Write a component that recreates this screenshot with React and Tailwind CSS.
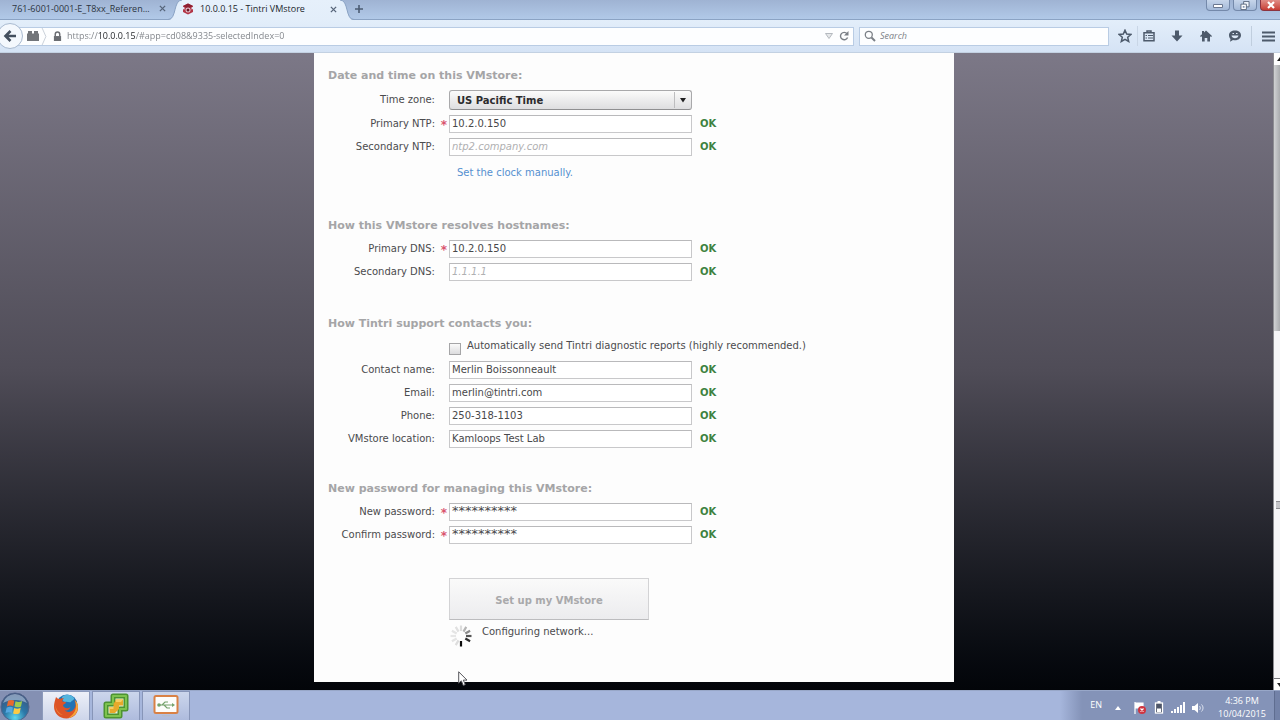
import { useState } from 'react';

const chromeFont = 'font-["Open_Sans","Noto_Sans",sans-serif]';

function TintriLogo() {
    return (
        <svg viewBox="0 0 24 24" className="h-3 w-3 shrink-0">
            <path d="M12 1 22 6v12l-10 5L2 18V6z" fill="#b23546" />
            <path d="M12 1 22 6l-10 5L2 6z" fill="#8d1f30" />
            <path d="M1 7l4 2v4l-4-1zM23 7l-4 2v4l4-1z" fill="#e3eefa" />
            <circle cx="12" cy="14" r="5" fill="#e9c9d2" />
            <circle cx="12" cy="14" r="3" fill="#6d1524" />
        </svg>
    );
}

function CloseGlyph() {
    return (
        <svg viewBox="0 0 8 8" className="h-[7px] w-[7px]">
            <path d="M1 1l6 6M7 1L1 7" stroke="#566479" strokeWidth="1.5" />
        </svg>
    );
}

function TabBar() {
    return (
        <div className="flex h-5 items-stretch border-b border-[#8ba3c4] bg-gradient-to-b from-[#9fb3d3] to-[#b1c9e8]">
            <div className="flex w-[168px] items-center justify-between pl-3 pr-[2px] pb-[2px] text-[9px] text-[#2c3440]">
                <a href="#reference" className="whitespace-nowrap">761-6001-0001-E_T8xx_Referen...</a>
                <button aria-label="Close tab"><CloseGlyph /></button>
            </div>
            <div className="-mb-px flex">
                <svg viewBox="0 0 14 20" className="h-5 w-[14px]">
                    <path d="M0 20C9 20 5 0 14 0v20z" fill="#e3eefa" />
                    <path d="M0 19.500C9 19.500 5 0 14 0" fill="none" stroke="#8ba3c4" />
                </svg>
                <div className="flex w-[158px] items-center bg-gradient-to-b from-[#e6f0fb] to-[#e3eefa] pb-[2px] text-[9px] text-[#22262c]">
                    <TintriLogo />
                    <a href="#vmstore" className="ml-[6px] flex-1 whitespace-nowrap">10.0.0.15 - Tintri VMstore</a>
                    <button aria-label="Close tab" className="mr-[3px]"><CloseGlyph /></button>
                </div>
                <svg viewBox="0 0 14 20" className="h-5 w-[14px]">
                    <path d="M14 20C5 20 9 0 0 0v20z" fill="#e3eefa" />
                    <path d="M14 19.500C5 19.500 9 0 0 0" fill="none" stroke="#8ba3c4" />
                </svg>
            </div>
            <button aria-label="New tab" className="pb-[2px]">
                <svg viewBox="0 0 10 10" className="h-[10px] w-[10px]">
                    <path d="M5 1v8M1 5h8" stroke="#4c5c73" strokeWidth="1.600" />
                </svg>
            </button>
            <div className="ml-auto flex items-start gap-[3px]">
                <button aria-label="Minimize" className="flex h-[11px] w-6 items-center justify-center rounded-b border border-t-0 border-[#7489aa] bg-gradient-to-b from-[#c6d5ea] to-[#a3b9d8]">
                    <svg viewBox="0 0 12 8" className="h-2 w-3"><path d="M1.500 3.500h9v3h-9z" fill="#fff" stroke="#6b7890" /></svg>
                </button>
                <button aria-label="Restore" className="flex h-[11px] w-6 items-center justify-center rounded-b border border-t-0 border-[#7489aa] bg-gradient-to-b from-[#c6d5ea] to-[#a3b9d8]">
                    <svg viewBox="0 0 12 10" className="h-[9px] w-3">
                        <path d="M4.500.500h6v6h-6z" fill="#eef3fa" stroke="#566479" />
                        <path d="M1.500 3.500h6v6h-6z" fill="#fff" stroke="#566479" />
                        <path d="M3.500 5.500h2v2h-2z" fill="#8496b2" />
                    </svg>
                </button>
                <button aria-label="Close" className="flex h-[11px] w-5 items-center justify-center rounded-bl border border-r-0 border-t-0 border-[#8c3440] bg-gradient-to-b from-[#e08c86] to-[#c63b34]">
                    <svg viewBox="0 0 10 8" className="h-2 w-[10px]"><path d="M2 1l6 6M8 1L2 7" stroke="#fff" strokeWidth="2.200" /></svg>
                </button>
            </div>
        </div>
    );
}

function Toolbar() {
    return (
        <div className="flex h-[33px] items-center border-b border-[#c3d1e2] bg-gradient-to-b from-[#e3eefa] to-[#d5e3f5]">
            <button aria-label="Back" className="z-10 -ml-[3px] flex h-[26px] w-[26px] shrink-0 items-center justify-center rounded-full border border-[#a9bad0] bg-[#f4f8fd]">
                <svg viewBox="0 0 14 14" className="h-[14px] w-[14px]">
                    <path d="M7.500 2L2.500 7l5 5M3 7h10" fill="none" stroke="#44505f" strokeWidth="2.600" />
                </svg>
            </button>
            <div className="-ml-2 flex h-[19px] flex-1 items-center border border-[#b9cce4] bg-[#fdfeff] pl-[11px] pr-1">
                <svg viewBox="0 0 12 11" className="h-[11px] w-3 shrink-0">
                    <path d="M0 2.500h1V0h4v2.500h2V0h4v2.500h1V10H0z" fill="#72757a" />
                </svg>
                <svg viewBox="0 0 6 18" className="ml-[2px] h-[17px] w-[6px] shrink-0">
                    <path d="M1 0l4 9-4 9" fill="none" stroke="#c7ced8" />
                </svg>
                <svg viewBox="0 0 10 12" className="ml-[6px] h-[11px] w-[9px] shrink-0">
                    <path d="M2.500 6V3.500a2.500 2.500 0 0 1 5 0V6" fill="none" stroke="#6a6d72" strokeWidth="1.600" />
                    <path d="M1 5.500h8V11H1z" fill="#6a6d72" />
                </svg>
                {/* the host part of the address is darker than the rest */}
                <input
                    aria-label="Address"
                    defaultValue="https://10.0.0.15/#app=cd08&9335-selectedIndex=0"
                    className="ml-[5px] flex-1 bg-[linear-gradient(90deg,#7d8187_31px,#1f2226_31px,#1f2226_68px,#7d8187_68px)] bg-clip-text text-[9px] text-transparent outline-none"
                />
                <svg viewBox="0 0 8 6" className="h-[6px] w-2"><path d="M.500.500h7L4 5.500z" fill="#e6e8ea" stroke="#b4b9bf" /></svg>
                <button aria-label="Reload" className="ml-[6px]">
                    <svg viewBox="0 0 10 10" className="h-[10px] w-[10px]">
                        <path d="M8 2.600A3.700 3.700 0 1 0 8.600 6.500" fill="none" stroke="#7a7f86" strokeWidth="1.400" />
                        <path d="M9.500 0v4.500H5z" fill="#7a7f86" />
                    </svg>
                </button>
            </div>
            <label className="ml-[5px] flex h-[19px] w-[250px] items-center border border-[#b9cce4] bg-[#fdfeff] pl-1">
                <svg viewBox="0 0 12 12" className="h-3 w-3 shrink-0">
                    <circle cx="4.800" cy="4.800" r="3.500" fill="none" stroke="#7b8087" strokeWidth="1.300" />
                    <path d="M7.500 7.500L11 11" stroke="#7b8087" strokeWidth="1.900" />
                </svg>
                <input aria-label="Search" placeholder="Search" className="ml-1 w-full bg-transparent text-[9px] italic outline-none placeholder:text-[#7c8086]" />
            </label>
            <div className="flex items-center pl-[9px] text-[#4d5a6b]">
                <button aria-label="Bookmark">
                    <svg viewBox="0 0 14 14" className="h-[14px] w-[14px]">
                        <path d="M7 1.200l1.700 3.900 4.200.400-3.200 2.800 1 4.200L7 10.300l-3.700 2.200 1-4.200L1.100 5.500l4.200-.400z" fill="none" stroke="currentColor" strokeWidth="1.500" />
                    </svg>
                </button>
                <span className="ml-[5px] h-5 w-px bg-[#c9d6e6]" />
                <button aria-label="Bookmarks list" className="ml-[5px]">
                    <svg viewBox="0 0 12 12" className="h-3 w-3">
                        <path d="M1 2.800h10v8H1zM4 2.500V1h4v1.500" fill="none" stroke="currentColor" strokeWidth="1.500" />
                        <path d="M2.500 5.500H4M5 5.500h5M2.500 8H4M5 8h5" stroke="currentColor" strokeWidth="1.200" />
                    </svg>
                </button>
                <button aria-label="Downloads" className="ml-4">
                    <svg viewBox="0 0 12 12" className="h-3 w-3"><path d="M4 .500h4v5h3.500L6 11.500.500 5.500H4z" fill="currentColor" /></svg>
                </button>
                <button aria-label="Home" className="ml-[17px]">
                    <svg viewBox="0 0 12 12" className="h-3 w-3">
                        <path d="M6 .500l6 5.500-.800 1L10 6.200V11.500H7.300V8H4.700v3.500H2V6.200L.800 7 0 6l2-1.800V1h2v1.500z" fill="currentColor" />
                    </svg>
                </button>
                <button aria-label="Chat" className="ml-4">
                    <svg viewBox="0 0 14 12" className="h-3 w-[14px]">
                        <path d="M7 .500c3.600 0 6 2 6 4.800s-2.400 5-6 5c-.700 0-1.300-.100-2-.200L2 11.800l.500-2.800C1.500 8 1 6.700 1 5.300 1 2.500 3.400.500 7 .500z" fill="currentColor" />
                        <path d="M3.500 5.500h7c-.300 1.900-1.700 2.700-3.500 2.700s-3.200-.800-3.500-2.700z" fill="#dce8f6" />
                        <path d="M4.500 3h1.500v1H4.500zM8 3h1.500v1H8z" fill="#dce8f6" />
                    </svg>
                </button>
                <span className="ml-[9px] h-5 w-px bg-[#c0cede]" />
                <button aria-label="Menu" className="ml-[10px] mr-[5px]">
                    <svg viewBox="0 0 13 11" className="h-[11px] w-[13px]"><path d="M0 1.500h13M0 5.500h13M0 9.500h13" stroke="currentColor" strokeWidth="2" /></svg>
                </button>
            </div>
        </div>
    );
}

function Section({ title, className = '', children }) {
    return (
        <section className={className}>
            <h2 className="mb-1 pl-[14px] text-[11px] font-bold leading-5 text-[#a5a5a7]">{title}</h2>
            <div className="flex flex-col gap-[5px]">{children}</div>
        </section>
    );
}

function Label({ id, children }) {
    return <label htmlFor={id} className="w-[121px] text-right leading-[18px]">{children}</label>;
}

function Field({ id, label, required, value, placeholder, masked }) {
    const [text, setText] = useState(value || '');
    return (
        <div className="flex h-[18px] items-center">
            <Label id={id}>{label}</Label>
            <span className="w-[14px] pt-[2px] pr-[2px] text-right text-[12px] font-bold leading-[14px] text-[#d9546e]">{required ? '*' : ''}</span>
            <input
                id={id}
                value={text}
                placeholder={placeholder}
                onChange={(e) => setText(e.target.value)}
                className={`h-[18px] w-[243px] border border-[#c8c8ca] border-t-[#b9b9bb] bg-white px-[2px] pb-[2px] text-[#48484a] outline-none placeholder:italic placeholder:text-[#b0b0b2] ${masked ? 'text-[13px]' : ''}`}
            />
            <span className="ml-2 font-bold leading-[18px] text-[#3d8240]">OK</span>
        </div>
    );
}

const spokes = [
    { angle: 0, color: '#dcdcdc' },
    { angle: 30, color: '#b5b5b5' },
    { angle: 60, color: '#8a8a8a' },
    { angle: 90, color: '#555555' },
    { angle: 120, color: '#2c2c2c' },
    { angle: 180, color: '#0c0c0c' },
    { angle: 210, color: '#dddddd' },
    { angle: 240, color: '#e4e4e4' },
    { angle: 270, color: '#e6e6e6' },
    { angle: 300, color: '#e4e4e4' },
    { angle: 330, color: '#e0e0e0' },
];

function Spinner() {
    return (
        <svg viewBox="0 0 24 24" className="h-6 w-6">
            {spokes.map((s) => (
                <path key={s.angle} d="M12 1.500v5.500" stroke={s.color} strokeWidth="2.200" transform={`rotate(${s.angle} 12 12)`} />
            ))}
        </svg>
    );
}

function SetupForm() {
    return (
        <form className='relative w-[640px] self-start bg-[#fdfdfd] pt-[13px] pb-[34px] font-["DejaVu_Sans",Verdana,sans-serif] text-[10px] text-[#4b4b4d]' onSubmit={(e) => e.preventDefault()}>
            <Section title="Date and time on this VMstore:">
                <div className="flex h-5 items-center">
                    <Label id="tz">Time zone:</Label>
                    <div className="relative ml-[14px]">
                        <select id="tz" className="block h-5 w-[243px] appearance-none rounded-[3px] border border-[#a9a9ab] border-b-[#8f8f91] bg-gradient-to-b from-[#fbfbfb] to-[#dedee0] pl-[7px] font-bold text-[#2b2b2d]">
                            <option>US Pacific Time</option>
                        </select>
                        <svg viewBox="0 0 18 16" className="pointer-events-none absolute right-0 top-[2px] h-4 w-[18px]">
                            <path d="M.500 0v16" stroke="#bdbdbf" />
                            <path d="M6 6h6L9 10.500z" fill="#1f1f20" />
                        </svg>
                    </div>
                </div>
                <Field id="ntp1" label="Primary NTP:" required value="10.2.0.150" />
                <Field id="ntp2" label="Secondary NTP:" placeholder="ntp2.company.com" />
                <a href="#clock" className="ml-[143px] self-start leading-6 text-[#5590d0]">Set the clock manually.</a>
            </Section>

            <Section title="How this VMstore resolves hostnames:" className="mt-[31px]">
                <Field id="dns1" label="Primary DNS:" required value="10.2.0.150" />
                <Field id="dns2" label="Secondary DNS:" placeholder="1.1.1.1" />
            </Section>

            <Section title="How Tintri support contacts you:" className="mt-[33px]">
                <div className="flex h-[18px] items-start pl-[135px]">
                    <input id="diag" type="checkbox" className="mt-[5px] h-3 w-3 appearance-none border border-[#a5a5a7] bg-gradient-to-b from-[#fafafa] to-[#dcdcde]" />
                    <label htmlFor="diag" className="ml-[6px] leading-4">Automatically send Tintri diagnostic reports (highly recommended.)</label>
                </div>
                <Field id="contact" label="Contact name:" value="Merlin Boissonneault" />
                <Field id="email" label="Email:" value="merlin@tintri.com" />
                <Field id="phone" label="Phone:" value="250-318-1103" />
                <Field id="location" label="VMstore location:" value="Kamloops Test Lab" />
            </Section>

            <Section title="New password for managing this VMstore:" className="mt-[31px]">
                <Field id="pw1" label="New password:" required masked value="**********" />
                <Field id="pw2" label="Confirm password:" required masked value="**********" />
            </Section>

            <div className="mt-[34px] pl-[135px]">
                <button className="block h-[42px] w-[200px] border border-[#d3d3d5] border-b-[#bcbcbe] bg-gradient-to-b from-[#fafafa] to-[#ececee] pt-[2px] font-bold text-[#a9a9ab]">Set up my VMstore</button>
                <div className="mt-1 flex items-start">
                    <Spinner />
                    <span className="ml-[9px] leading-4">Configuring network...</span>
                </div>
            </div>

            {/* mouse pointer */}
            <svg viewBox="0 0 10 16" className="pointer-events-none absolute left-[144px] top-[618px] h-4 w-[10px]">
                <path d="M.700.800v11.400l2.600-2.400 2 4.700 2-.900-2-4.500h3.700z" fill="#fff" stroke="#55555a" />
            </svg>
        </form>
    );
}

function Scrollbar() {
    return (
        <div className="flex w-[7px] shrink-0 flex-col border-l border-[#8d8d92] bg-[#f0f0f2]">
            <div className="flex h-3 items-center justify-end bg-white">
                <svg viewBox="0 0 3 4" className="h-1 w-[3px]"><path d="M3 0v4H0z" fill="#222" /></svg>
            </div>
            <div className="flex-[267] bg-gradient-to-r from-[#d0d1d3] to-[#a9abae]" />
            <div className="flex flex-[348] flex-col items-end justify-center bg-[#f5f5f7]">
                <span className="h-2 w-1 border-y border-[#8c8c90] bg-[#c4c4c8]" />
            </div>
            <div className="flex h-3 items-center justify-end border-t border-[#77777c] bg-white">
                <svg viewBox="0 0 3 4" className="h-1 w-[3px]"><path d="M0 0h3v4z" fill="#222" /></svg>
            </div>
        </div>
    );
}

function WindowsOrb() {
    return (
        <svg viewBox="0 0 30 30" className="h-[30px] w-[30px]">
            <defs>
                <radialGradient id="orb" cx="50%" cy="88%" r="85%">
                    <stop offset="0" stopColor="#5fd8ee" />
                    <stop offset=".45" stopColor="#2b78a8" />
                    <stop offset="1" stopColor="#3b527c" />
                </radialGradient>
            </defs>
            <circle cx="15" cy="16" r="14" fill="url(#orb)" stroke="#52658c" />
            <path d="M3 12a12.500 12.500 0 0 1 24 0c-7-4-17-4-24 0z" fill="#b9cadf" opacity=".6" />
            <path d="M8 10c2-1.300 4-1.300 6.300-.300l-1.100 5.500c-2-1-4-.900-6.300.200z" fill="#e8692f" />
            <path d="M15.500 10.200c2.300 1 4.500.900 6.700-.300l-1.200 5.500c-2.100 1.200-4.300 1.200-6.500.200z" fill="#9fcb50" />
            <path d="M6.600 16.700c2.200-1.100 4.200-1.200 6.300-.200l-1.100 5.400c-2-.900-4-.900-6.300.200z" fill="#55a7e0" />
            <path d="M14.200 17c2.100 1 4.300.900 6.500-.200l-1.100 5.400c-2.200 1.100-4.300 1.200-6.500.200z" fill="#fbcb45" />
        </svg>
    );
}

function FirefoxIcon() {
    return (
        <svg viewBox="0 0 26 26" className="h-[26px] w-[26px]">
            <circle cx="14" cy="12" r="10.500" fill="#2272b4" />
            <path d="M9 4c3-3 9-3 12 1 1 2-2 2-3 4-2 1-4-1-6 0-2 0-3-3-3-5z" fill="#54b5dd" />
            <path d="M3 4c1 1 2 2 3.500 2C8 5 10 5 11 5.500 9.500 6.500 9 7.500 9.500 8.500c1 .500 3 0 3.500 1-.500 1.500-2.500 1.500-3 3 1 3 5 3.500 7.500 1.500-1 3-4 4-6 3.500 4 3 10 1 11-5 .300-2-.200-4-1.500-6 3 2.500 4.500 6 4 9.500-1 6-6 9.500-11.500 9.500C6 25.500 1 20 1 13.500c0-3.500 1-6 2-9.500z" fill="#dd5427" />
            <path d="M22 7c3 3 3.500 6 2.500 10-1 4-5 7.500-9 8 4.500-3 7.500-7 7.500-12 0-2-.300-4-1-6z" fill="#f5a83a" />
            <path d="M2.500 11c0 5 3 9 7.500 11C5 21.500 2 17 2.500 11z" fill="#f08536" />
        </svg>
    );
}

function VsphereIcon() {
    return (
        <svg viewBox="0 0 26 26" className="h-[26px] w-[26px]">
            <path d="M10 3h13v13h-6v7H3V11h7z" fill="#e7efdc" stroke="#4d9331" strokeWidth="5" strokeLinejoin="round" />
            <path d="M10 3h13v13h-6v7H3V11h7z" fill="none" stroke="#7dc34f" strokeWidth="2" strokeLinejoin="round" />
            <path d="M13 6.500h7v6h-4V16l-4 4H6.500v-6h4V11z" fill="#e6a92b" />
            <path d="M13 6.500h7L18 9h-5zM6.500 14h4v2h-4z" fill="#f6cd62" />
        </svg>
    );
}

function UsbIcon() {
    return (
        <svg viewBox="0 0 26 24" className="h-6 w-[26px]">
            <rect x="1.500" y="2" width="23" height="17" rx="1.500" fill="#fdfdfb" stroke="#d98145" strokeWidth="2" />
            <path d="M5 11h15M9 11l3-3h3M11 11l3 3h3" fill="none" stroke="#75a26c" strokeWidth="1.200" />
            <circle cx="6" cy="11" r="1.800" fill="#75a26c" />
            <path d="M19 9l3 2-3 2z" fill="#75a26c" />
            <path d="M9 21h8v1.500H9z" fill="#b5bccd" />
        </svg>
    );
}

function Taskbar() {
    return (
        <footer className={`flex h-[30px] items-stretch border-t border-[#98a7c8] bg-[#a6b6dc] ${chromeFont}`}>
            <button aria-label="Start" className="flex w-[42px] items-center bg-[#8490b3]"><WindowsOrb /></button>
            <button aria-label="Firefox" className="flex w-[48px] items-center justify-center border border-b-0 border-[#8c9abb] bg-gradient-to-b from-[#edf0f8] to-[#cdd5ea]"><FirefoxIcon /></button>
            <button aria-label="vSphere Client" className="ml-[2px] flex w-[48px] items-center justify-center border border-b-0 border-[#8795b8] bg-gradient-to-b from-[#ccd6ec] to-[#aebbdd]"><VsphereIcon /></button>
            <button aria-label="USB Display" className="ml-[2px] flex w-[48px] items-center justify-center border border-b-0 border-[#8795b8] bg-gradient-to-b from-[#ccd6ec] to-[#aebbdd]"><UsbIcon /></button>
            <div className="ml-auto flex items-center bg-gradient-to-r from-[#a6b6dc] to-[#8493b8] to-10% pl-[30px] text-[9px] text-white">
                <button className="pb-[2px]">EN</button>
                <svg viewBox="0 0 6 4" className="ml-[13px] mt-1 h-1 w-[6px]"><path d="M3 0l3 4H0z" fill="#fff" /></svg>
                <svg viewBox="0 0 14 14" className="ml-3 mt-1 h-[14px] w-[14px]">
                    <path d="M2 1v12M3 2h7v5H3z" fill="#fff" stroke="#fff" strokeWidth="1.200" />
                    <circle cx="9" cy="9" r="4" fill="#cf3540" />
                    <path d="M7.500 7.500l3 3M10.500 7.500l-3 3" stroke="#fff" strokeWidth="1.200" />
                </svg>
                <svg viewBox="0 0 10 13" className="ml-[7px] mt-1 h-[13px] w-[10px]">
                    <path d="M3.500 0h3v2h-3z" fill="#fff" />
                    <rect x="1.500" y="2" width="7" height="10" fill="#4d5568" stroke="#fff" strokeWidth="1.300" />
                    <path d="M3 7.500h4V11H3z" fill="#fff" />
                </svg>
                <svg viewBox="0 0 14 11" className="ml-[7px] mt-1 h-[11px] w-[14px]">
                    <path d="M1 11V9M4 11V7M7 11V5M10 11V3M13 11V0" stroke="#fff" strokeWidth="2" />
                </svg>
                <svg viewBox="0 0 12 12" className="ml-[7px] mt-1 h-3 w-3">
                    <path d="M0 4h2.500L6 1v10L2.500 8H0z" fill="#fff" />
                    <path d="M7.500 4c1 1 1 3 0 4M9.500 2.500c2 2 2 5 0 7" fill="none" stroke="#dfe5f1" />
                </svg>
                <div className="ml-3 w-[52px] pt-[3px] text-center leading-[13px]">
                    <div>4:36 PM</div>
                    <div>10/04/2015</div>
                </div>
                <button aria-label="Show desktop" className="ml-[6px] h-full w-[6px] border-l border-[#5f6d90] bg-[#7382a8]" />
            </div>
        </footer>
    );
}

export default function App() {
    return (
        <div className="flex min-h-screen flex-col overflow-hidden">
            <header className={chromeFont}>
                <TabBar />
                <Toolbar />
            </header>
            <main className="flex flex-1 items-stretch bg-gradient-to-b from-[#7c7887] via-[#4f4c57] to-[#030509]">
                <div className="flex flex-1 justify-center pb-[7px] pr-[5px]">
                    <SetupForm />
                </div>
                <Scrollbar />
            </main>
            <Taskbar />
        </div>
    );
}
